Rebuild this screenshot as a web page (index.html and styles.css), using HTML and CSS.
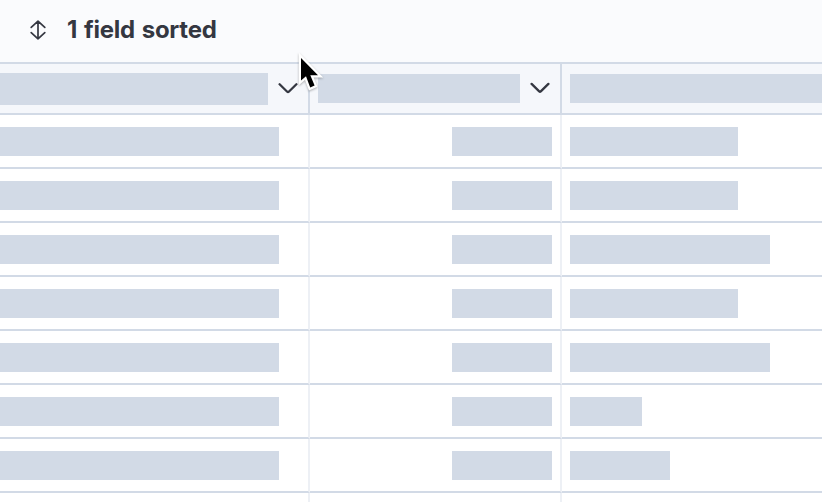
FILE: index.html
```html
<!DOCTYPE html>
<html lang="en">
<head>
<meta charset="utf-8">
<title>Data grid</title>
<link rel="stylesheet" href="styles.css">
</head>
<body>
<div class="toolbar">
  <svg class="sort-icon" width="18" height="20" viewBox="0 0 18 20"><path d="M9 1.2v17.6M2.2 7.4L9 1.2l6.8 6.2M2.2 12.6L9 18.8l6.8-6.2"/></svg>
  <span class="sort-label">1 field sorted</span>
</div>
<div class="row head">
  <div class="cell first"><span class="bar title-a"></span><svg class="chevron" width="20" height="14" viewBox="0 0 20 14"><path d="M1.6 3.2L9.2 10.7Q10 11.4 10.8 10.7L18.4 3.2"/></svg></div>
  <div class="cell second"><span class="bar title-b"></span><svg class="chevron" width="20" height="14" viewBox="0 0 20 14"><path d="M1.6 1.9L9.2 9.4Q10 10.1 10.8 9.4L18.4 1.9"/></svg></div>
  <div class="cell third"><span class="bar title-c"></span></div>
</div>
<div class="row"><div class="cell first"><span class="bar name"></span></div><div class="cell second"><span class="bar number"></span></div><div class="cell third"><span class="bar medium"></span></div></div>
<div class="row"><div class="cell first"><span class="bar name"></span></div><div class="cell second"><span class="bar number"></span></div><div class="cell third"><span class="bar medium"></span></div></div>
<div class="row"><div class="cell first"><span class="bar name"></span></div><div class="cell second"><span class="bar number"></span></div><div class="cell third"><span class="bar long"></span></div></div>
<div class="row"><div class="cell first"><span class="bar name"></span></div><div class="cell second"><span class="bar number"></span></div><div class="cell third"><span class="bar medium"></span></div></div>
<div class="row"><div class="cell first"><span class="bar name"></span></div><div class="cell second"><span class="bar number"></span></div><div class="cell third"><span class="bar long"></span></div></div>
<div class="row"><div class="cell first"><span class="bar name"></span></div><div class="cell second"><span class="bar number"></span></div><div class="cell third"><span class="bar tiny"></span></div></div>
<div class="row"><div class="cell first"><span class="bar name"></span></div><div class="cell second"><span class="bar number"></span></div><div class="cell third"><span class="bar short"></span></div></div>
<div class="row last"><div class="cell first"></div><div class="cell second"></div><div class="cell third"></div></div>
<svg class="cursor" width="34" height="46" viewBox="0 0 34 46"><path d="M6 6v22.5l5-4.3 4.2 11.3 4.4-1.9-4.3-10.3H23z"/></svg>
</body>
</html>
```

FILE: styles.css
```css
* { box-sizing: border-box; }
body {
  margin: 0;
  height: 502px;
  overflow: hidden;
  position: relative;
  background: #fff;
  font-family: Inter, sans-serif;
}
.toolbar {
  height: 64px;
  display: flex;
  align-items: center;
  padding: 0 0 3px 29px;
  background: #fafbfd;
  border-bottom: 2px solid #d2dae6;
}
.sort-icon {
  fill: none;
  stroke: #343741;
  stroke-width: 1.7;
  stroke-linecap: round;
  stroke-linejoin: round;
  margin: 1px 20px 0 0;
}
.sort-label {
  font-size: 24px;
  line-height: 36px;
  font-weight: 700;
  letter-spacing: -0.25px;
  word-spacing: 1.4px;
  color: #343741;
}
.row {
  display: grid;
  grid-template-columns: 310px 252px 1fr;
  height: 54px;
}
.cell {
  display: flex;
  align-items: flex-start;
  padding-top: 12px;
  border-right: 2px solid #edf0f5;
  border-bottom: 2px solid #d2dae6;
}
.third { padding-left: 8px; border-right: 0; }
.second { justify-content: flex-end; padding-right: 8px; }
.bar { display: block; height: 29px; background: #d2dae6; }
.name { width: 279px; }
.number { width: 100px; }
.medium { width: 168px; }
.long { width: 200px; }
.tiny { width: 72px; }
.short { width: 100px; }
.last { height: 9px; }
.last .cell { padding-top: 0; border-bottom: 0; }
.head { height: 51px; background: #f5f7fb; }
.head .cell { padding-top: 10px; border-right-color: #d2dae6; }
.head .first { padding-top: 9px; }
.head .second { padding-left: 8px; padding-right: 0; justify-content: flex-start; }
.title-a { width: 268px; height: 32px; }
.title-b { width: 202px; }
.title-c { width: 100%; }
.chevron {
  fill: none;
  stroke: #343741;
  stroke-width: 2.3;
  stroke-linecap: round;
  margin: 8px 0 0 10px;
}
.cursor {
  position: absolute;
  left: 295px;
  top: 52px;
  fill: #000;
  stroke: #fff;
  stroke-width: 4.4;
  paint-order: stroke;
  stroke-miterlimit: 4;
  filter: drop-shadow(0 1px 1px rgba(0, 0, 0, 0.3));
}
```
